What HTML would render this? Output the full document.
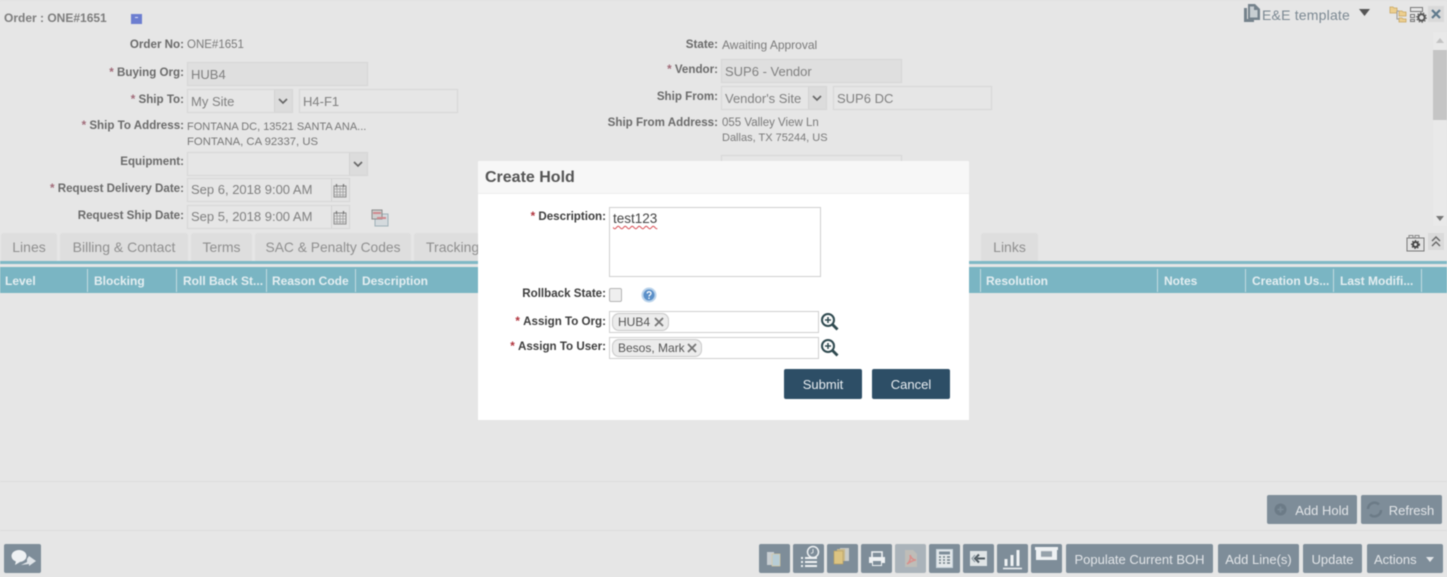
<!DOCTYPE html>
<html><head><meta charset="utf-8"><style>
html,body{margin:0;padding:0}
body{width:1447px;height:577px;position:relative;overflow:hidden;background:#e6e6e6;font-family:"Liberation Sans",sans-serif}
#w{position:absolute;left:0;top:0;width:1447px;height:577px;filter:blur(.45px)}
#w div,#w svg{position:absolute;box-sizing:border-box}
.t{white-space:nowrap}
.l{white-space:nowrap;font-weight:bold;font-size:11.6px;color:#6a6a6a;text-align:right;line-height:14px}
.l b{color:#a06a78}
.v{white-space:nowrap;font-size:11.5px;color:#7a7a7a;line-height:14px}
.i{border:1px solid #d6d6d6;height:24px;font-size:13px;color:#808080;line-height:23px;padding-left:3px;white-space:nowrap}
.g{background:#dfdfdf}
.s{background:#dcdcdc;border-left:1px solid #d2d2d2;top:0;bottom:0}
.tab{background:#dedede;height:28px;top:233px;border-radius:3px 3px 0 0;font-size:14px;color:#8f8f8f;line-height:29px;text-align:center;white-space:nowrap;overflow:hidden}
.h{top:267px;height:26px;font-weight:bold;font-size:12px;color:#e4eef1;line-height:29px;white-space:nowrap}
.sp{top:269px;width:1px;height:23px;background:#c3dbe1}
.b{background:#7e8d99;border-radius:2px;top:544px;height:29px;color:#e2e5e8;font-size:13px;line-height:31px;text-align:center;white-space:nowrap}
.m{font-weight:bold;font-size:11.6px;color:#3d3d3d;text-align:right;white-space:nowrap;line-height:14px}
.m b{color:#b0323c}
.f{background:#fff;border:1px solid #cfcfcf}
.c{background:#ececec;border:1px solid #c8c8c8;border-radius:7px;height:18px;font-size:12px;color:#555;line-height:17px;padding-left:5px;white-space:nowrap;top:1px;left:2px}
.k{background:#2d4e66;border-radius:2px;top:369px;height:30px;width:78px;color:#e9eef2;font-size:13px;line-height:31px;text-align:center}
</style></head><body><div id="w">

<div style="left:0;top:0;width:1447px;height:1px;background:#e0e0e0"></div>
<div class="t" style="left:4px;top:11px;font-weight:bold;font-size:12px;color:#7d7d7d;line-height:14px">Order : ONE#1651</div>
<div style="left:131px;top:14px;width:11px;height:10px;background:#6c7ed0"></div>
<div style="left:135px;top:17px;width:3px;height:1px;background:#dfe3f7"></div>

<!-- left labels -->
<div class="l" style="right:1263px;top:38px">Order No:</div>
<div class="v" style="left:187px;top:38px">ONE#1651</div>
<div class="l" style="right:1263px;top:66px"><b>* </b>Buying Org:</div>
<div class="i g" style="left:187px;top:62px;width:181px">HUB4</div>
<div class="l" style="right:1263px;top:93px"><b>* </b>Ship To:</div>
<div class="i" style="left:187px;top:89px;width:106px">My Site<div class="s" style="right:0;width:18px"></div>
<svg style="right:4px;top:8px" width="10" height="6" viewBox="0 0 10 6"><path d="M1 1l4 4 4-4" fill="none" stroke="#666" stroke-width="1.600"/></svg></div>
<div class="i" style="left:299px;top:89px;width:159px">H4-F1</div>
<div class="l" style="right:1263px;top:119px"><b>* </b>Ship To Address:</div>
<div class="v" style="left:187px;top:120px;color:#777;font-size:11px">FONTANA DC, 13521 SANTA ANA...</div>
<div class="v" style="left:187px;top:135px;color:#777;font-size:11.300px">FONTANA, CA 92337, US</div>
<div class="l" style="right:1263px;top:155px">Equipment:</div>
<div class="i" style="left:187px;top:152px;width:181px"><div class="s" style="right:0;width:18px"></div>
<svg style="right:4px;top:8px" width="10" height="6" viewBox="0 0 10 6"><path d="M1 1l4 4 4-4" fill="none" stroke="#666" stroke-width="1.600"/></svg></div>
<div class="l" style="right:1263px;top:182px"><b>* </b>Request Delivery Date:</div>
<div class="i" style="left:187px;top:178px;width:163px;line-height:22px">Sep 6, 2018 9:00 AM<div class="s" style="right:0;width:18px;background:#e4e4e4"></div>
<svg style="right:2px;top:4px" width="14" height="15" viewBox="0 0 14 15"><path d="M1 3h12v11H1z" fill="#e2e2e2" stroke="#8c8c8c"/><path d="M1 6h12M1 9h12M1 12h12M4 4v10M7 4v10M10 4v10" stroke="#a0a0a0" stroke-width=".8"/><path d="M3.500 1v3M10.500 1v3" stroke="#777" stroke-width="1.300"/></svg></div>
<div class="l" style="right:1263px;top:209px">Request Ship Date:</div>
<div class="i" style="left:187px;top:205px;width:163px;line-height:22px">Sep 5, 2018 9:00 AM<div class="s" style="right:0;width:18px;background:#e4e4e4"></div>
<svg style="right:2px;top:4px" width="14" height="15" viewBox="0 0 14 15"><path d="M1 3h12v11H1z" fill="#e2e2e2" stroke="#8c8c8c"/><path d="M1 6h12M1 9h12M1 12h12M4 4v10M7 4v10M10 4v10" stroke="#a0a0a0" stroke-width=".8"/><path d="M3.500 1v3M10.500 1v3" stroke="#777" stroke-width="1.300"/></svg></div>
<svg style="left:371px;top:209px" width="18" height="18" viewBox="0 0 18 18"><rect x="4" y="5" width="13" height="12" fill="#d4dadd" stroke="#9fb0b8"/><rect x="1" y="1" width="10" height="9" fill="#cfcfcf" stroke="#8a8a8a"/><path d="M2 4h8M6 9h9" stroke="#d08a8e" stroke-width="2"/></svg>

<!-- right form -->
<div class="l" style="right:729px;top:38px">State:</div>
<div class="v" style="left:722px;top:38px;font-size:12px">Awaiting Approval</div>
<div class="l" style="right:729px;top:63px"><b>* </b>Vendor:</div>
<div class="i g" style="left:721px;top:59px;width:181px">SUP6 - Vendor</div>
<div class="l" style="right:729px;top:90px">Ship From:</div>
<div class="i" style="left:721px;top:86px;width:106px">Vendor's Site<div class="s" style="right:0;width:18px"></div>
<svg style="right:4px;top:8px" width="10" height="6" viewBox="0 0 10 6"><path d="M1 1l4 4 4-4" fill="none" stroke="#666" stroke-width="1.600"/></svg></div>
<div class="i" style="left:833px;top:86px;width:159px">SUP6 DC</div>
<div class="l" style="right:729px;top:116px">Ship From Address:</div>
<div class="v" style="left:722px;top:116px">055 Valley View Ln</div>
<div class="v" style="left:722px;top:131px;font-size:11px">Dallas, TX 75244, US</div>
<div class="i" style="left:721px;top:155px;width:181px"></div>

<!-- top right -->
<svg style="left:1244px;top:4px" width="16" height="19" viewBox="0 0 16 19"><path d="M0 4h3v11h7v3H0z" fill="#75828c"/><path d="M4 0h7l5 5v11H4z" fill="#75828c"/><path d="M6 2.500h4v3.500h3.500v7.500H6z" fill="#c8ced2"/></svg>
<div class="t" style="left:1262px;top:6px;font-size:14px;color:#7c8993;line-height:18px;letter-spacing:.2px">E&amp;E template</div>
<svg style="left:1359px;top:9px" width="11" height="7" viewBox="0 0 11 7"><path d="M0 0h11L5.500 7z" fill="#555"/></svg>
<svg style="left:1389px;top:5px" width="18" height="18" viewBox="0 0 18 18"><path d="M1 2h3l1 1h3v5H1zM10 6h3l1 1h3v4h-7zM10 13h3l1 1h3v3h-7z" fill="#eccf8f" stroke="#c8a560" stroke-width=".8"/><path d="M8 6h2M8 6v8h2" fill="none" stroke="#999"/></svg>
<svg style="left:1409px;top:5px" width="18" height="18" viewBox="0 0 18 18"><path d="M1.500 2.500h12v4h-12zM1.500 9.500h4v3h-4zM1.500 14.500h4v2h-4z" fill="none" stroke="#777"/><circle cx="12.500" cy="12.500" r="3.200" fill="none" stroke="#555" stroke-width="2"/><circle cx="12.500" cy="12.500" r="4.800" fill="none" stroke="#555" stroke-width="1" stroke-dasharray="1.500 1.500"/></svg>
<div style="left:1428px;top:6px;width:16px;height:16px;background:#d9d9d9"></div>
<svg style="left:1431px;top:9px" width="10" height="10" viewBox="0 0 10 10"><path d="M1 1l8 8M9 1l-8 8" stroke="#5f7a8c" stroke-width="2.200"/></svg>

<!-- scrollbar -->
<div style="left:1433px;top:32px;width:14px;height:194px;background:#e9e9e9"></div>
<div style="left:1433px;top:50px;width:14px;height:70px;background:#c5c5c5"></div>
<svg style="left:1436px;top:38px" width="8" height="5" viewBox="0 0 8 5"><path d="M0 5h8L4 0z" fill="#c2c2c2"/></svg>
<svg style="left:1436px;top:216px" width="8" height="5" viewBox="0 0 8 5"><path d="M0 0h8L4 5z" fill="#777"/></svg>

<!-- tabs -->
<div class="tab" style="left:1px;width:56px">Lines</div>
<div class="tab" style="left:60px;width:128px">Billing &amp; Contact</div>
<div class="tab" style="left:191px;width:61px">Terms</div>
<div class="tab" style="left:255px;width:156px;font-size:13.800px">SAC &amp; Penalty Codes</div>
<div class="tab" style="left:414px;width:80px;text-align:left;padding-left:12px">Tracking</div>
<div class="tab" style="left:981px;width:57px">Links</div>
<svg style="left:1406px;top:234px" width="19" height="18" viewBox="0 0 19 18"><path d="M1 4h17v13H1z" fill="#e2e2e2" stroke="#777"/><path d="M3 4V1.500h4V4M9 4V1.500h4V4" fill="none" stroke="#888"/><circle cx="9.500" cy="10.500" r="2.500" fill="none" stroke="#444" stroke-width="2"/><circle cx="9.500" cy="10.500" r="4" fill="none" stroke="#444" stroke-width="1" stroke-dasharray="1.500 1.500"/></svg>
<div style="left:1428px;top:233px;width:16px;height:17px;background:#dadada"></div>
<svg style="left:1431px;top:236px" width="10" height="11" viewBox="0 0 10 11"><path d="M1 5l4-4 4 4M1 10l4-4 4 4" fill="none" stroke="#666" stroke-width="1.400"/></svg>

<!-- grid header -->
<div style="left:0;top:261px;width:1447px;height:3px;background:#7fb8c5"></div>
<div style="left:0;top:267px;width:1447px;height:26px;background:#7ab5c3"></div>
<div class="h" style="left:5px">Level</div><div class="sp" style="left:87px"></div>
<div class="h" style="left:94px">Blocking</div><div class="sp" style="left:176px"></div>
<div class="h" style="left:183px">Roll Back St...</div><div class="sp" style="left:266px"></div>
<div class="h" style="left:272px">Reason Code</div><div class="sp" style="left:355px"></div>
<div class="h" style="left:362px">Description</div>
<div class="sp" style="left:980px"></div>
<div class="h" style="left:986px">Resolution</div><div class="sp" style="left:1157px"></div>
<div class="h" style="left:1164px">Notes</div><div class="sp" style="left:1245px"></div>
<div class="h" style="left:1252px">Creation Us...</div><div class="sp" style="left:1333px"></div>
<div class="h" style="left:1340px">Last Modifi...</div><div class="sp" style="left:1421px"></div>

<!-- footer -->
<div style="left:0;top:481px;width:1447px;height:1px;background:#dcdcdc"></div>
<div style="left:0;top:530px;width:1447px;height:1px;background:#dcdcdc"></div>
<div class="b" style="left:1267px;top:495px;width:90px;padding-left:20px">Add Hold</div>
<svg style="left:1273px;top:502px" width="15" height="15" viewBox="0 0 15 15"><circle cx="7.500" cy="7.500" r="6" fill="#6c7b87"/><path d="M7.500 4.500v6M4.500 7.500h6" stroke="#7e8d99" stroke-width="1.500"/></svg>
<div class="b" style="left:1361px;top:495px;width:81px;padding-left:20px">Refresh</div>
<svg style="left:1365px;top:500px" width="19" height="19" viewBox="0 0 19 19"><path d="M3 9a6.500 6.500 0 0 1 11-4.500M16 10a6.500 6.500 0 0 1-11 4.500" fill="none" stroke="#6c7b87" stroke-width="2.500"/></svg>

<div class="b" style="left:4px;top:544px;width:37px"></div>
<svg style="left:9px;top:548px" width="28" height="20" viewBox="0 0 28 20"><ellipse cx="10" cy="8" rx="7.500" ry="6" fill="#eef1f3"/><path d="M7 13l-1 4 5-3z" fill="#eef1f3"/><path d="M12 17l6-3v-3l2-3 7 5-7 5v-2z" fill="#dfe4e8"/></svg>

<div class="b" style="left:759px;width:31px"></div>
<svg style="left:766px;top:551px" width="17" height="16" viewBox="0 0 17 16"><rect x="1" y="1" width="7" height="13" fill="#c8ced2"/><rect x="6" y="3" width="8" height="12" fill="#b7cdd6" stroke="#d9c9a0" stroke-width=".7"/></svg>
<div class="b" style="left:793px;width:31px"></div>
<svg style="left:796px;top:544px" width="27" height="27" viewBox="0 0 27 27"><circle cx="17" cy="8" r="5.500" fill="none" stroke="#eef1f3" stroke-width="1.500"/><path d="M17 5v3.500l-2 1" fill="none" stroke="#dfe3e6"/><path d="M5 14h2M9 14h12M5 18h2M9 18h12M5 22h2M9 22h12" stroke="#eef1f3" stroke-width="2"/></svg>
<div class="b" style="left:827px;width:31px"></div>
<svg style="left:832px;top:546px" width="21" height="21" viewBox="0 0 21 21"><rect x="8" y="2" width="9" height="13" fill="#c9ccc9"/><rect x="5" y="3" width="8" height="12" fill="#c9b98d"/><rect x="2" y="5" width="9" height="13" fill="#dcc482" stroke="#b89f5e" stroke-width=".6"/></svg>
<div class="b" style="left:861px;width:31px"></div>
<svg style="left:868px;top:550px" width="18" height="17" viewBox="0 0 18 17"><path d="M4 7V2h10v5" fill="none" stroke="#eef1f3" stroke-width="1.600"/><path d="M1 7h16v6h-3v3H4v-3H1z" fill="#eef1f3"/><rect x="5" y="11" width="8" height="4" fill="#7e8d99"/></svg>
<div class="b" style="left:895px;width:31px;background:#aab3ba"></div>
<svg style="left:902px;top:549px" width="17" height="19" viewBox="0 0 17 19"><path d="M3 1h8l4 4v13H3z" fill="#bfbdb8"/><path d="M5 15c3-2 4-6 3-9 1 3 3 5 6 5-3 0-6 2-9 4z" fill="none" stroke="#d8908c" stroke-width="1.500"/></svg>
<div class="b" style="left:929px;width:31px"></div>
<svg style="left:936px;top:549px" width="17" height="19" viewBox="0 0 17 19"><rect x=".5" y=".5" width="16" height="18" fill="#e3e8ea" stroke="#c7d3da"/><rect x="3" y="2.500" width="11" height="3" fill="#7e8d99"/><path d="M3 8h2M7 8h2M11 8h3M3 11h2M7 11h2M11 11h3M3 14h2M7 14h2M11 14h3" stroke="#6d7a84" stroke-width="1.600"/></svg>
<div class="b" style="left:963px;width:31px"></div>
<svg style="left:970px;top:551px" width="17" height="15" viewBox="0 0 17 15"><rect width="17" height="15" fill="#dfe4e6"/><path d="M15 7.500H7M9 3.500l-4 4 4 4" fill="none" stroke="#4f5b63" stroke-width="2"/><path d="M5 4L2 7.500 5 11" fill="none" stroke="#8c99a2" stroke-width="1.200"/></svg>
<div class="b" style="left:997px;width:31px"></div>
<svg style="left:1003px;top:548px" width="19" height="22" viewBox="0 0 19 22"><path d="M3 18v-7M9 18V7M15 18V2" stroke="#eef1f3" stroke-width="3"/><path d="M0 20.500h19" stroke="#eef1f3" stroke-width="1.500"/></svg>
<div class="b" style="left:1031px;width:31px"></div>
<svg style="left:1034px;top:545px" width="25" height="17" viewBox="0 0 25 17"><path d="M1 2h23v3h-1v10H2V5H1z" fill="#eef1f3"/><path d="M7 6h11v6H7z" fill="#a5aeb5"/><path d="M7 8h11M7 10h11" stroke="#7e8d99" stroke-width=".7"/></svg>

<div class="b" style="left:1066px;width:147px">Populate Current BOH</div>
<div class="b" style="left:1218px;width:81px">Add Line(s)</div>
<div class="b" style="left:1303px;width:59px">Update</div>
<div class="b" style="left:1367px;width:76px;text-align:left;padding-left:7px">Actions</div>
<svg style="left:1426px;top:557px" width="8" height="5" viewBox="0 0 8 5"><path d="M0 0h8L4 5z" fill="#e2e5e8"/></svg>

<!-- modal -->
<div style="left:478px;top:161px;width:491px;height:259px;background:#fff"></div>
<div style="left:478px;top:161px;width:491px;height:33px;background:#f7f7f7;border-bottom:1px solid #eee"></div>
<div class="t" style="left:485px;top:168px;font-weight:bold;font-size:16px;color:#555;line-height:20px">Create Hold</div>

<div class="m" style="right:841px;top:210px"><b>* </b>Description:</div>
<div class="f" style="left:609px;top:207px;width:212px;height:70px"></div>
<div class="t" style="left:613px;top:211px;font-size:13.500px;color:#444;line-height:16px;text-decoration:underline wavy #d8484f 1px;text-underline-offset:2px">test123</div>

<div class="m" style="right:841px;top:287px">Rollback State:</div>
<div style="left:609px;top:288px;width:13px;height:14px;background:#efefef;border:1px solid #b5b5b5;border-radius:2px"></div>
<svg style="left:641px;top:287px" width="16" height="16" viewBox="0 0 16 16"><circle cx="8" cy="8" r="7.500" fill="#b9d2ea"/><circle cx="8" cy="8" r="5.500" fill="#5a8fc8"/><path d="M6.200 6.500c0-2.300 3.800-2.300 3.800 0 0 1.400-2 1.400-2 3M8 10.500v1.500" fill="none" stroke="#fff" stroke-width="1.200"/></svg>

<div class="m" style="right:841px;top:315px"><b>* </b>Assign To Org:</div>
<div class="f" style="left:609px;top:311px;width:210px;height:22px"><div class="c" style="width:57px">HUB4</div></div>
<svg style="left:654px;top:317px" width="10" height="10" viewBox="0 0 10 10"><path d="M1 1l8 8M9 1l-8 8" stroke="#777" stroke-width="1.800"/></svg>
<svg style="left:820px;top:312px" width="19" height="19" viewBox="0 0 19 19"><circle cx="8" cy="8" r="6" fill="none" stroke="#2f4a50" stroke-width="2"/><path d="M8 5v6M5 8h6" stroke="#2f4a50" stroke-width="1.500"/><path d="M12.500 12.500l5 5" stroke="#2f4a50" stroke-width="2.800"/></svg>

<div class="m" style="right:841px;top:340px"><b>* </b>Assign To User:</div>
<div class="f" style="left:609px;top:337px;width:210px;height:22px"><div class="c" style="width:90px">Besos, Mark</div></div>
<svg style="left:687px;top:343px" width="10" height="10" viewBox="0 0 10 10"><path d="M1 1l8 8M9 1l-8 8" stroke="#777" stroke-width="1.800"/></svg>
<svg style="left:820px;top:338px" width="19" height="19" viewBox="0 0 19 19"><circle cx="8" cy="8" r="6" fill="none" stroke="#2f4a50" stroke-width="2"/><path d="M8 5v6M5 8h6" stroke="#2f4a50" stroke-width="1.500"/><path d="M12.500 12.500l5 5" stroke="#2f4a50" stroke-width="2.800"/></svg>

<div class="k" style="left:784px">Submit</div>
<div class="k" style="left:872px">Cancel</div>
</div></body></html>
